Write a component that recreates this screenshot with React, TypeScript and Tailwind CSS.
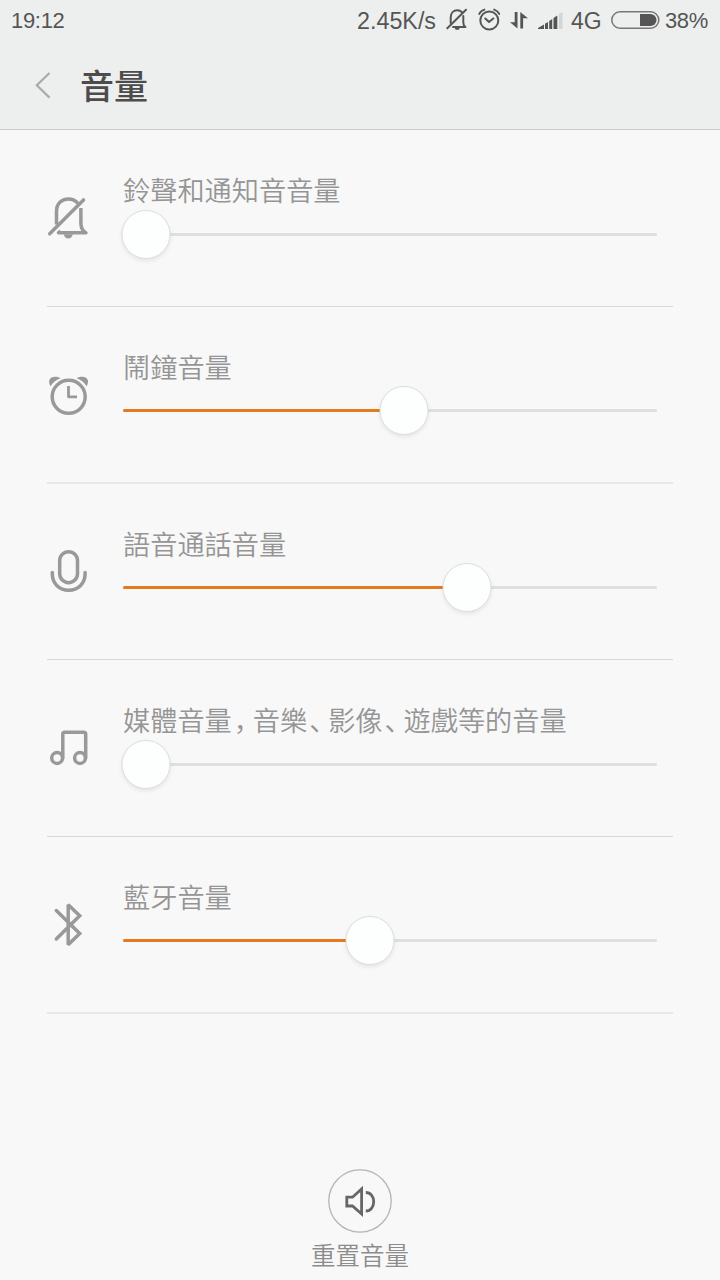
import type { ReactNode } from "react";

const stroke = {
  fill: "none",
  stroke: "currentColor",
  strokeWidth: 3.5,
  strokeLinecap: "round",
  strokeLinejoin: "round",
} as const;

function RowIcon({ children }: { children: ReactNode }) {
  return (
    <svg className="mt-[60px] h-14 w-12 shrink-0 text-[#999]" viewBox="0 0 48 56" {...stroke}>
      {children}
    </svg>
  );
}

const MutedBell = () => (
  <RowIcon>
    <path d="M12.500 34.500V21.500C12.500 13.600 17.600 9 24.300 9c4 0 7.500 1.600 9.800 4.500" strokeLinecap="butt" />
    <path d="M36.900 18V33c0 4.500 1.500 7.800 5 9.800H14.500L16.500 41" strokeLinecap="butt" />
    <path d="M5.700 43.800 39.500 9.900" />
    <path d="M19.800 44.300h9c-.4 2.600-2 4.200-4.500 4.200s-4.100-1.600-4.500-4.200z" fill="currentColor" stroke="none" />
  </RowIcon>
);

const AlarmClock = () => (
  <RowIcon>
    <circle cx="24.700" cy="29.800" r="16.500" />
    <path d="M24.500 19V29.800H33" strokeWidth="2.800" strokeLinecap="butt" />
    <path
      d="M6.600 19.300C3.600 14.500 5.300 9.700 11 9.700c2.600 0 4.500.5 5.700 1.600C12.500 12.700 9 15.300 6.600 19.300zM42.600 19.300c3-4.800 1.300-9.600-4.400-9.600-2.600 0-4.500.5-5.700 1.600 4.200 1.400 7.700 4 10.100 8z"
      fill="currentColor"
      stroke="none"
    />
  </RowIcon>
);

const Microphone = () => (
  <RowIcon>
    <rect x="15.700" y="7.700" width="17.800" height="31" rx="8.900" />
    <path d="M8.300 28.500v1.300C8.300 39.600 15.400 46.300 24.700 46.300S41.100 39.600 41.100 29.800v-1.300" />
  </RowIcon>
);

const Music = () => (
  <RowIcon>
    <circle cx="13.100" cy="38" r="5.400" />
    <circle cx="36" cy="38" r="5.400" />
    <path d="M18.800 38V14.200a2 2 0 0 1 2-2H39.700a2 2 0 0 1 2 2V38" />
  </RowIcon>
);

const Bluetooth = () => (
  <RowIcon>
    <path d="M12.300 13.500 35.700 36.500 24.200 47.700V7.800L35.700 18.800 12.300 42" strokeLinejoin="miter" strokeMiterlimit="2" />
  </RowIcon>
);

/* Punctuation is set narrower than a full em, as in the system font. */
const Mark = ({ children }: { children: string }) => (
  <span className="pl-[2px] tracking-[-8.2px]">{children}</span>
);

type Row = {
  id: string;
  label: ReactNode;
  icon: ReactNode;
  knob: number;
  height: string;
  labelHeight: string;
  line: string;
};

const rows: Row[] = [
  { id: "ring", label: "鈴聲和通知音音量", icon: <MutedBell />, knob: 23, height: "h-[177px]", labelHeight: "h-[41px]", line: "h-px bg-[#d8d8d8]" },
  { id: "alarm", label: "鬧鐘音量", icon: <AlarmClock />, knob: 281, height: "h-[177px]", labelHeight: "h-10", line: "h-[2px] bg-[#e8e8e8]" },
  { id: "voice", label: "語音通話音量", icon: <Microphone />, knob: 344, height: "h-[176px]", labelHeight: "h-10", line: "h-px bg-[#d8d8d8]" },
  {
    id: "media",
    label: (
      <>
        媒體音量<Mark>，</Mark>音樂<Mark>、</Mark>影像<Mark>、</Mark>遊戲等的音量
      </>
    ),
    icon: <Music />,
    knob: 23,
    height: "h-[177px]",
    labelHeight: "h-[41px]",
    line: "h-px bg-[#d8d8d8]",
  },
  { id: "bluetooth", label: "藍牙音量", icon: <Bluetooth />, knob: 247, height: "h-[177px]", labelHeight: "h-10", line: "h-[2px] bg-[#e8e8e8]" },
];

function Slider({ knob }: { knob: number }) {
  return (
    <div className="relative flex h-[49px] w-[534px] items-center">
      <div className="h-[3px] w-full overflow-hidden rounded-full bg-[#dfdfdf]">
        {knob > 23 && <div className="h-full bg-[#e57a20]" style={{ width: knob }} />}
      </div>
      <div
        className="absolute top-0 size-[49px] -translate-x-1/2 rounded-full border border-[#dedede] bg-[#fdfefe] shadow-[0_2px_4px_rgba(0,0,0,0.08)]"
        style={{ left: knob }}
      />
    </div>
  );
}

function VolumeRow({ row }: { row: Row }) {
  return (
    <section className={`flex flex-col ${row.height}`}>
      <div className="flex min-h-0 flex-1 pl-11">
        {row.icon}
        <div className="ml-[31px] flex flex-col pt-[39px]">
          <div className={`whitespace-nowrap text-[27.2px] leading-[40px] font-[350] text-[#959595] ${row.labelHeight}`}>
            {row.label}
          </div>
          <Slider knob={row.knob} />
        </div>
      </div>
      <div className={`mr-[47px] ml-[47px] shrink-0 ${row.line}`} />
    </section>
  );
}

function StatusBar() {
  return (
    <div className="flex h-10 items-center pl-[11px] text-[22px] leading-10 text-[#555] [font-family:'Liberation_Sans',Arial,sans-serif]">
      <span className="pt-px tracking-[-0.3px]">19:12</span>
      <span className="ml-auto w-[89px] whitespace-nowrap pt-px text-[23.3px]">2.45K/s</span>
      <svg className="h-10 w-[22px] shrink-0" viewBox="0 0 22 40" {...stroke} strokeWidth="2">
        <path d="M4.700 23V17.500C4.700 12.800 7.700 10.200 11.200 10.200c2 0 3.600.7 4.800 2M17.300 16v6.500c0 2.200.8 3.500 2.200 4.500H7" />
        <path d="M1.300 28.300 20 9.800" />
        <path d="M8.700 27.800h5c-.3 1.500-1.200 2.200-2.500 2.200s-2.200-.7-2.500-2.200z" fill="currentColor" stroke="none" />
      </svg>
      <svg className="ml-[10px] h-10 w-[22px] shrink-0" viewBox="0 0 22 40" {...stroke} strokeWidth="2">
        <circle cx="11.300" cy="20.500" r="9" />
        <path d="M7.300 18.500 11 22 15.300 18.500M1.300 14C2.100 12 3.800 10.500 6.300 9.600M21.200 14C20.400 12 18.700 10.500 16.200 9.600" />
      </svg>
      <svg className="ml-[10px] h-10 w-[18px] shrink-0" viewBox="0 0 18 40" fill="currentColor">
        <path d="M4.700 12h2.800v16.500L0 22.300h4.700zM10.300 28.500V12L18 18.300h-4.900v10.200z" />
      </svg>
      <svg className="ml-[10px] h-10 w-[25px] shrink-0" viewBox="0 0 25 40" fill="currentColor">
        <path d="M0 29v-1l6-3.500V29zM7 23.800l3-1.900V29H7zM11.200 21l3-1.900V29h-3zM15.500 18l3.800-2.400V29h-3.800z" />
        <path d="M21 13.800 24.500 12v17H21z" fill="#d4d6d5" />
      </svg>
      <span className="ml-[8px] w-[40px] pt-px text-[23px]">4G</span>
      <svg className="h-10 w-[49px] shrink-0" viewBox="0 0 49 40">
        <rect x=".8" y="11.800" width="47" height="16.400" rx="8.200" fill="none" stroke="#777" strokeWidth="1.500" />
        <path d="M29 14h10.500a6 6 0 0 1 0 12H29z" fill="#555" />
      </svg>
      <span className="ml-[5px] w-[55px] whitespace-nowrap pt-px tracking-[-0.4px]">38%</span>
    </div>
  );
}

export default function App() {
  return (
    <div className="flex h-[1280px] w-[720px] flex-col overflow-hidden bg-[#f8f8f8] [font-family:'Noto_Sans_CJK_SC',sans-serif]">
      <header className="flex h-[130px] shrink-0 flex-col border-b border-[#c9caca] bg-[#edefee]">
        <StatusBar />
        <div className="flex h-[89px] items-center">
          <svg className="ml-[34px] h-[30px] w-[18px]" viewBox="0 0 18 30" fill="none" stroke="#aaa" strokeWidth="2.200">
            <path d="M15.500 3 2.800 15.300 15.500 27.600" />
          </svg>
          <h1 className="ml-7 pt-px text-[34px] leading-[50px] font-medium text-[#4c4c4c]">音量</h1>
        </div>
      </header>
      <main>
        {rows.map((row) => (
          <VolumeRow key={row.id} row={row} />
        ))}
      </main>
      <button className="mx-auto mt-[155px] flex flex-col items-center">
        <svg className="size-16" viewBox="0 0 64 64" fill="none" stroke="#666" strokeWidth="2.800">
          <circle cx="32" cy="32" r="31.200" stroke="#b4b4b4" strokeWidth="1.300" />
          <path d="M18.800 28.200H24.500L33.600 20V45L24.500 37H18.800z" />
          <path d="M37.800 23.500C42.500 23.500 45.700 27.500 45.700 32.700S42.500 42 37.800 42" />
        </svg>
        <span className="mt-[4px] text-[24.500px] leading-9 font-[350] text-[#8c8c8c]">重置音量</span>
      </button>
    </div>
  );
}
